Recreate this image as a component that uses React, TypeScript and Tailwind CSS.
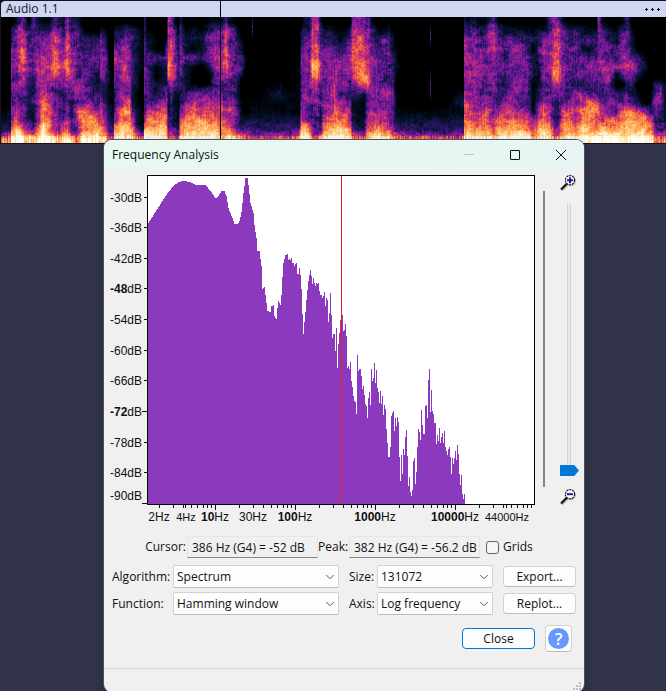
import { useState, type ReactNode } from 'react';
import { ChevronDown } from 'lucide-react';

// Energy per time keyframe: [x, 14 bands from high to low frequency, one hex digit each]
const ENERGY: [number, string][] = [
  [0, '00000000001229'], [9, '00000000001239'], [10, '0345565444469d'], [15, '245556555568ce'],
  [20, '567888764446ad'], [23, '4577877644457c'], [27, '0344454333236c'], [32, '4344443233224b'],
  [36, '2445666555568d'], [42, '13556776789aef'], [48, '1355675567899e'], [53, '46789a8545556c'],
  [58, '3466786434455b'], [62, '2345675433358d'], [66, '5788898544569d'], [70, '2355567542245a'],
  [76, '24445446648558'], [82, '01334445549a9e'], [90, '00344433348aae'], [95, '003443223469ae'],
  [98, '003433223467ad'], [99, '025555533678ad'], [104, '0134454323558b'], [108, '00001121112247'],
  [112, '00000000111236'], [113, '0245655533569d'], [118, '024455545689be'], [124, '0456687557a9be'],
  [128, '0355556558a9be'], [131, '034334422246ac'], [135, '02322222112259'], [140, '01111100001126'],
  [142, '01111100001126'], [143, '333444544347ae'], [146, '012243444489be'], [155, '001041022579be'],
  [162, '00003222469acd'], [165, '001442226688ac'], [167, '67779a94222348'], [170, '5678888643335a'],
  [174, '14455665212247'], [177, '01223333211136'], [179, '2445554433579c'], [184, '012242223579ad'],
  [192, '02214101568abe'], [200, '01213000568abe'], [208, '135443015689be'], [214, '145566544689bd'],
  [220, '1455675457789c'], [225, '4778896445678c'], [228, '2555665446779d'], [234, '0344454434556c'],
  [240, '00124420011249'], [244, '00001100000248'], [250, '00000000011237'], [251, '24000000011237'],
  [252, '00000000011237'], [280, '00000001211237'], [288, '00000000111237'], [298, '00000111111248'],
  [300, '024455544657af'], [304, '244555547556cf'], [308, '2344555544459d'], [311, '67888c96544458'],
  [316, '67788b96555347'], [319, '2445676434224a'], [322, '0234555455579e'], [328, '023456556679bf'],
  [334, '013455567789cf'], [340, '011356544679cf'], [346, '013356454578be'], [350, '0345664334569c'],
  [352, '56788875312258'], [358, '56888897311137'], [364, '56788998211238'], [367, '4667789844468c'],
  [372, '1344566455679e'], [378, '013444445568ae'], [382, '0144444465679d'], [388, '0245444365568c'],
  [392, '0122344354446a'], [396, '00011210111248'], [402, '00000000001237'], [429, '00000000001237'],
  [430, '04400034401237'], [431, '00000000001237'], [444, '00000000001237'], [458, '00000000121237'],
  [463, '00000000121237'], [464, '2456666567889d'], [468, '145556755788bf'], [474, '2455566555679d'],
  [480, '134555644578af'], [485, '134445445679ae'], [489, '356665544567ae'], [493, '4666665544568c'],
  [498, '134554433468ac'], [504, '024335324578be'], [512, '024555556679be'], [520, '024555564568be'],
  [527, '023445444457ae'], [533, '0120222011257b'], [539, '023433123468bd'], [543, '025665544689ce'],
  [549, '345566544569ad'], [554, '56778997533359'], [558, '57788988433379'], [562, '245556644478ac'],
  [568, '034444443579ad'], [575, '0444445454669c'], [581, '023344435789ce'], [588, '0241464449aabe'],
  [596, '0133354348a8ae'], [598, '6444554446889d'], [602, '145557544568ce'], [608, '024446744558be'],
  [616, '012337103458ae'], [622, '145557303499bd'], [626, '3455674245aabe'], [632, '01224643239abe'],
  [638, '00003420127abe'], [645, '000012000069be'], [650, '000000000137ad'], [655, '00010003464358'],
  [660, '00000003554347'], [666, '00000001111247'],
];

// Colour map stops, quiet to loud
const STOPS = [
  [0, 0, 0], [3, 14, 34], [22, 22, 74], [58, 20, 112], [98, 24, 144], [138, 28, 150], [178, 38, 130],
  [214, 60, 96], [240, 98, 68], [250, 134, 68], [253, 164, 86], [254, 194, 116], [255, 220, 154], [255, 238, 196],
  [255, 250, 232], [255, 255, 250],
];

const SPEC_W = 666;
const SPEC_H = 126;
const STEPS = 45;

function hash(x: number, y: number) {
  let h = Math.imul(x, 374761393) + Math.imul(y, 668265263);
  h = Math.imul(h ^ (h >>> 13), 1274126177);
  return ((h ^ (h >>> 16)) >>> 0) / 4294967295;
}

// Smooth noise between lattice points sx by sy pixels apart
function drift(x: number, y: number, sx: number, sy: number) {
  const i = Math.floor(x / sx);
  const j = Math.floor(y / sy) + 700;
  const u = x / sx - i;
  const v = y / sy + 700 - j;
  const a = hash(i, j) * (1 - u) + hash(i + 1, j) * u;
  const b = hash(i, j + 1) * (1 - u) + hash(i + 1, j + 1) * u;
  return a * (1 - v) + b * v - 0.5;
}

function band(row: string, y: number) {
  const p = Math.min(Math.max((y - 4.5) / 9, 0), 13);
  const i = Math.min(Math.floor(p), 12);
  const a = parseInt(row[i], 16);
  const b = parseInt(row[i + 1], 16);
  return a + (b - a) * (p - i);
}

function stepColor(step: number) {
  const p = (step / STEPS) * 15;
  const i = Math.min(Math.floor(p), 14);
  const c = STOPS[i].map((v, k) => Math.round(v + (STOPS[i + 1][k] - v) * (p - i)));
  return `rgb(${c.join(',')})`;
}

// One path per colour step, made of vertical runs
function buildSpectrogram() {
  const paths: string[] = Array(STEPS + 1).fill('');
  let k = 0;
  for (let x = 0; x < SPEC_W; x++) {
    while (k < ENERGY.length - 2 && ENERGY[k + 1][0] <= x) k++;
    const [x0, r0] = ENERGY[k];
    const [x1, r1] = ENERGY[k + 1];
    const t = (x - x0) / (x1 - x0);
    let prev = -1;
    let start = 0;
    for (let y = 0; y <= SPEC_H; y++) {
      let step = -1;
      if (y < SPEC_H) {
        const base = band(r0, y) * (1 - t) + band(r1, y) * t;
        const fine = hash(x, y) - 0.5;
        const column = hash(x, 9000 + (y >> 4)) - 0.5;
        const noise = fine * 1.2 + drift(x, y, 2, 2) * 2.2 + drift(x, y, 6, 4) * 2.2 + column;
        let v = base - 0.5 + noise * Math.min(base / 4, 1);
        if (y > SPEC_H - 8) v += 1.2 + column * 2.4;
        step = Math.round((Math.min(Math.max(v, 0), 15) / 15) * STEPS);
      }
      if (step !== prev) {
        if (prev > 0) paths[prev] += `M${x} ${start}h1v${y - start}h-1z`;
        prev = step;
        start = y;
      }
    }
  }
  return paths;
}

const SPECTROGRAM = buildSpectrogram();

// Outline of the spectrum up to 290, then one top per pixel column
const CURVE: [number, number][] = [
  [148, 223], [153, 215], [160, 204], [167, 193], [173, 186], [178, 182], [183, 181], [190, 182], [196, 185],
  [205, 185], [210, 191], [215, 198], [217, 197], [221, 191], [224, 191], [226, 196], [228, 208], [232, 218],
  [234, 224], [237, 224], [239, 221], [241, 212], [243, 193], [245, 178], [247, 178], [248, 185], [250, 203],
  [253, 213], [254, 225], [256, 238], [257, 251], [259, 251], [261, 266], [262, 289], [264, 287], [265, 295],
  [267, 311], [270, 312], [271, 306], [273, 305], [274, 316], [276, 319], [277, 308], [278, 301], [280, 305],
  [281, 295], [282, 277], [283, 263], [285, 255], [287, 254], [288, 260], [289, 259], [290, 260],
];
const TOPS = [
  258, 263, 263, 266, 264, 263, 274, 274, 268, 275, 289, 314, 334, 322, 312, 300, 290, 281, 275, 270, 276, 284,
  278, 283, 286, 283, 284, 283, 291, 295, 295, 298, 296, 292, 306, 298, 300, 322, 313, 293, 315, 338, 334, 334,
  351, 328, 368, 344, 333, 320, 318, 315, 331, 330, 324, 336, 368, 366, 369, 362, 381, 387, 396, 401, 402, 414,
  355, 371, 369, 369, 376, 389, 386, 395, 404, 406, 418, 398, 392, 405, 369, 381, 378, 363, 383, 370, 388, 392,
  403, 391, 404, 396, 415, 405, 409, 429, 443, 457, 457, 447, 416, 413, 411, 431, 418, 426, 417, 422, 457, 481,
  455, 474, 449, 455, 437, 430, 456, 486, 477, 492, 496, 490, 461, 458, 484, 472, 447, 429, 432, 440, 410, 425,
  434, 434, 406, 405, 418, 380, 369, 412, 390, 411, 414, 423, 423, 444, 435, 441, 428, 443, 437, 433, 443, 431,
  447, 451, 455, 449, 447, 457, 474, 458, 464, 458, 451, 460, 445, 454, 474, 485, 475, 494, 499, 494,
];

function buildSpectrum() {
  let d = 'M148 504';
  let k = 0;
  for (let x = 148; x <= 290; x++) {
    while (k < CURVE.length - 2 && CURVE[k + 1][0] <= x) k++;
    const [x0, y0] = CURVE[k];
    const [x1, y1] = CURVE[k + 1];
    d += `V${Math.round(y0 + ((y1 - y0) * (x - x0)) / (x1 - x0))}h1`;
  }
  TOPS.forEach((top) => {
    d += `V${top}h1`;
  });
  return `${d}V504z`;
}

const SPECTRUM = buildSpectrum();

const DB_TICKS = [
  { db: 30, y: 197 }, { db: 36, y: 227 }, { db: 42, y: 258 }, { db: 48, y: 288, bold: true }, { db: 54, y: 319 },
  { db: 60, y: 350 }, { db: 66, y: 380 }, { db: 72, y: 411, bold: true, long: true }, { db: 78, y: 442 },
  { db: 84, y: 472 }, { db: 90, y: 503, long: true, labelY: 495 },
];

const HZ_LABELS = [
  { hz: 2, x: 159 }, { hz: 4, x: 186, small: true }, { hz: 10, x: 215, bold: true }, { hz: 30, x: 253 },
  { hz: 100, x: 295, bold: true }, { hz: 1000, x: 375, bold: true }, { hz: 10000, x: 455, bold: true },
  { hz: 44000, x: 507, small: true },
];

const HZ_TICKS: { x: number; major: boolean }[] = [{ x: 185, major: false }, { x: 506, major: false }];
for (let decade = 0; decade < 5; decade++) {
  for (let n = 1; n < 10; n++) {
    const x = Math.floor(135.4 + 80 * (decade + Math.log10(n)));
    if (x > 148) HZ_TICKS.push({ x, major: n === 1 });
  }
}

function Track() {
  return (
    <section className="relative border-t border-b border-l border-[#14141c] bg-black">
      <header className="flex h-4 items-center justify-between rounded-tl bg-[#cfd5f3] pr-1.5 pl-[5px]">
        <h1 className="font-['Open_Sans','Noto_Sans',sans-serif] text-[12px] leading-4 text-[#15151c]">Audio 1.1</h1>
        <button aria-label="Track menu" className="flex h-4 items-center">
          <svg width="15" height="3" viewBox="0 0 15 3" shapeRendering="crispEdges">
            <path d="M1 0h1v3h-1zM0 1h3v1h-3zM7 0h1v3h-1zM6 1h3v1h-3zM13 0h1v3h-1zM12 1h3v1h-3z" fill="#15151c" />
          </svg>
        </button>
      </header>
      <svg
        className="block h-[126px] w-full"
        viewBox={`0 0 ${SPEC_W} ${SPEC_H}`}
        preserveAspectRatio="none"
        shapeRendering="crispEdges"
        role="img"
        aria-label="Spectrogram"
      >
        <rect width={SPEC_W} height={SPEC_H} fill="#000" />
        {SPECTROGRAM.map((d, step) => d && <path key={step} d={d} fill={stepColor(step)} />)}
      </svg>
      <div className="absolute inset-y-0 left-[219px] w-px bg-black" />
    </section>
  );
}

function TitleBar() {
  return (
    <header className="flex h-[30px] items-center bg-linear-to-r from-[#e6f8f0] to-[#e8f5f4] pl-2">
      <h2 className="flex-1 leading-4">Frequency Analysis</h2>
      <button aria-label="Minimize" className="flex h-full w-[46px] items-center justify-center">
        <svg width="10" height="10" viewBox="0 0 10 10">
          <path d="M0 4.5h10" stroke="#b5c5c1" />
        </svg>
      </button>
      <button aria-label="Maximize" className="flex h-full w-[46px] items-center justify-center">
        <svg width="10" height="10" viewBox="0 0 10 10">
          <rect x="0.5" y="0.5" width="9" height="9" rx="0.5" fill="none" stroke="#111" />
        </svg>
      </button>
      <button aria-label="Close window" className="flex h-full w-[46px] items-center justify-center">
        <svg width="10" height="10" viewBox="0 0 10 10">
          <path d="M0 0l10 10M10 0l-10 10" stroke="#111" />
        </svg>
      </button>
    </header>
  );
}

function Plot() {
  return (
    <svg
      className="block shrink-0 font-['Liberation_Sans',Arial,sans-serif] text-[12px]"
      width="432"
      height="356"
      viewBox="104 170 432 356"
      fill="#111"
      role="img"
      aria-label="Spectrum"
    >
      <g shapeRendering="crispEdges">
        <rect x="147" y="175" width="388" height="330" fill="#000" />
        <rect x="148" y="176" width="386" height="328" fill="#fff" />
        <path d={SPECTRUM} fill="#8b3abe" />
        <rect x="341" y="176" width="1" height="328" fill="#e81e24" />
        {DB_TICKS.map((t) => (
          <rect key={t.db} x={t.long ? 142 : 144} y={t.y} width={t.long ? 5 : 3} height="1" />
        ))}
        {HZ_TICKS.map((t) => (
          <rect key={`${t.x}-${t.major}`} x={t.x} y="505" width="1" height={t.major ? 5 : 3} />
        ))}
      </g>
      {DB_TICKS.map((t) => (
        <text key={t.db} x="142" y={(t.labelY ?? t.y) + 5} textAnchor="end">
          <tspan className={t.bold ? 'font-bold' : ''}>-{t.db}</tspan>dB
        </text>
      ))}
      {HZ_LABELS.map((t) => (
        <text key={t.hz} x={t.x} y="521" textAnchor="middle" className={t.small ? 'text-[11px]' : ''}>
          <tspan className={t.bold ? 'font-bold' : ''}>{t.hz}</tspan>Hz
        </text>
      ))}
    </svg>
  );
}

function ZoomIcon({ plus }: { plus?: boolean }) {
  return (
    <svg width="16" height="16" viewBox="0 0 16 16" fill="none">
      <path d="M2 15.5l6-6" stroke="#b9b9b9" strokeWidth="2" />
      <circle cx="10.7" cy="6" r="4.6" stroke="#b9b9b9" strokeWidth="1.4" />
      <path d="M1 14.5l6-6" stroke="#111" strokeWidth="2.2" />
      <circle cx="10" cy="5.2" r="4.6" fill="#fff" stroke="#111" strokeWidth="1.1" strokeDasharray="2.2 0.7" />
      <path d={plus ? 'M7 5.2h6M10 2.2v6' : 'M7 5.2h6'} stroke="#1a1aa0" strokeWidth="2" />
    </svg>
  );
}

function ZoomColumn() {
  return (
    <div className="flex flex-col items-start pt-[5px]">
      <ZoomIcon plus />
      <input
        type="range"
        aria-label="Vertical zoom"
        min={0}
        max={100}
        defaultValue={0}
        className="mt-[13px] mb-[13px] h-[272px] w-[19px] appearance-none bg-transparent [direction:rtl] [writing-mode:vertical-lr] [&::-webkit-slider-runnable-track]:flex [&::-webkit-slider-runnable-track]:h-full [&::-webkit-slider-runnable-track]:w-[19px] [&::-webkit-slider-runnable-track]:bg-[linear-gradient(to_right,transparent_7px,#d0d4d4_7px,#d0d4d4_8px,#e5eaea_8px,#e5eaea_10px,#d0d4d4_10px,#d0d4d4_11px,transparent_11px)] [&::-webkit-slider-thumb]:h-[11px] [&::-webkit-slider-thumb]:w-[19px] [&::-webkit-slider-thumb]:appearance-none [&::-webkit-slider-thumb]:bg-[#0078d7] [&::-webkit-slider-thumb]:[clip-path:polygon(0_0,75%_0,100%_50%,75%_100%,0_100%)]"
      />
      <ZoomIcon />
    </div>
  );
}

function Readout({ id, label, value }: { id: string; label: string; value: string }) {
  return (
    <>
      <label htmlFor={id} className="pr-px text-right whitespace-nowrap">{label}</label>
      <input
        id={id}
        readOnly
        value={value}
        className="h-[22px] min-w-0 border border-[#e6e6e6] border-b-[#868686] bg-[#f0f0f0] pl-1 outline-none"
      />
    </>
  );
}

function Choice({ id, label, options, indent }: { id: string; label: string; options: string[]; indent?: boolean }) {
  return (
    <>
      <label htmlFor={id} className={indent ? 'pl-2.5' : ''}>{label}</label>
      <div className="relative">
        <select
          id={id}
          className="h-[23px] w-full appearance-none rounded-xs border border-[#d2d2d2] border-b-[#bcbcbc] bg-[#fdfdfd] pl-[3px] outline-none"
        >
          {options.map((o) => (
            <option key={o}>{o}</option>
          ))}
        </select>
        <ChevronDown className="pointer-events-none absolute top-[5px] right-0.5 h-3.5 w-3.5 text-[#444]" strokeWidth={1.5} />
      </div>
    </>
  );
}

function PushButton({ children, primary }: { children: ReactNode; primary?: boolean }) {
  return (
    <button
      className={`h-[21px] w-[73px] rounded border bg-[#fdfdfd] leading-none ${
        primary ? 'border-[#0078d4]' : 'border-[#d2d2d2] border-b-[#bcbcbc]'
      }`}
    >
      {children}
    </button>
  );
}

function HelpButton() {
  return (
    <button aria-label="Help" className="flex h-[27px] w-[27px] items-center justify-center rounded border border-[#d2d2d2] border-b-[#bcbcbc] bg-[#fdfdfd]">
      <span className="flex h-[21px] w-[21px] items-center justify-center rounded-full bg-[#6699ff] text-[17px] leading-none font-semibold text-white">
        ?
      </span>
    </button>
  );
}

function FrequencyDialog() {
  const [grids, setGrids] = useState(false);

  return (
    <div
      role="dialog"
      aria-label="Frequency Analysis"
      className="absolute top-[140px] left-[104px] w-[480px] overflow-hidden rounded-lg bg-[#f0f0f0] font-['Open_Sans','Noto_Sans',sans-serif] text-[12px] text-[#111] shadow-[0_0_0_1px_#50525f,0_4px_12px_rgba(0,0,0,0.35)]"
    >
      <TitleBar />
      <div className="flex">
        <Plot />
        <div className="mt-[21px] ml-[7px] h-[296px] w-0.5 bg-[#868686]" />
        <div className="ml-[15px]">
          <ZoomColumn />
        </div>
      </div>

      <div className="mt-2.5 grid grid-cols-[83px_131px_31px_131px_auto] items-center">
        <Readout id="cursor" label="Cursor:" value="386 Hz (G4) = -52 dB" />
        <Readout id="peak" label="Peak:" value="382 Hz (G4) = -56.2 dB" />
        <label className="flex items-center gap-1 pl-1.5">
          <input
            type="checkbox"
            checked={grids}
            onChange={(e) => setGrids(e.target.checked)}
            className="h-[13px] w-[13px] appearance-none rounded-[3px] border border-[#626262] bg-[#f6f6f6] checked:bg-[#0078d4]"
          />
          Grids
        </label>
      </div>

      <div className="mt-[7px] grid grid-cols-[61px_1fr_38px_116px_83px] items-center gap-y-1 px-2">
        <Choice id="algorithm" label="Algorithm:" options={['Spectrum']} />
        <Choice id="size" label="Size:" options={['131072']} indent />
        <div className="flex justify-end"><PushButton>Export...</PushButton></div>
        <Choice id="function" label="Function:" options={['Hamming window']} />
        <Choice id="axis" label="Axis:" options={['Log frequency']} indent />
        <div className="flex justify-end"><PushButton>Replot...</PushButton></div>
      </div>

      <div className="mt-2.5 flex items-center justify-end gap-2.5 pr-3">
        <PushButton primary>Close</PushButton>
        <HelpButton />
      </div>

      <footer className="mt-4 flex h-6 items-end justify-end border-t border-[#d7d7d7] pr-[3px] pb-0.5">
        <svg width="8" height="8" viewBox="0 0 8 8" fill="#bdbdbd" shapeRendering="crispEdges">
          <path d="M6 0h2v2h-2zM3 3h2v2h-2zM6 3h2v2h-2zM0 6h2v2h-2zM3 6h2v2h-2zM6 6h2v2h-2z" />
        </svg>
      </footer>
    </div>
  );
}

export default function App() {
  return (
    <main className="relative min-h-screen overflow-hidden bg-[#32344a]">
      <Track />
      <FrequencyDialog />
    </main>
  );
}
